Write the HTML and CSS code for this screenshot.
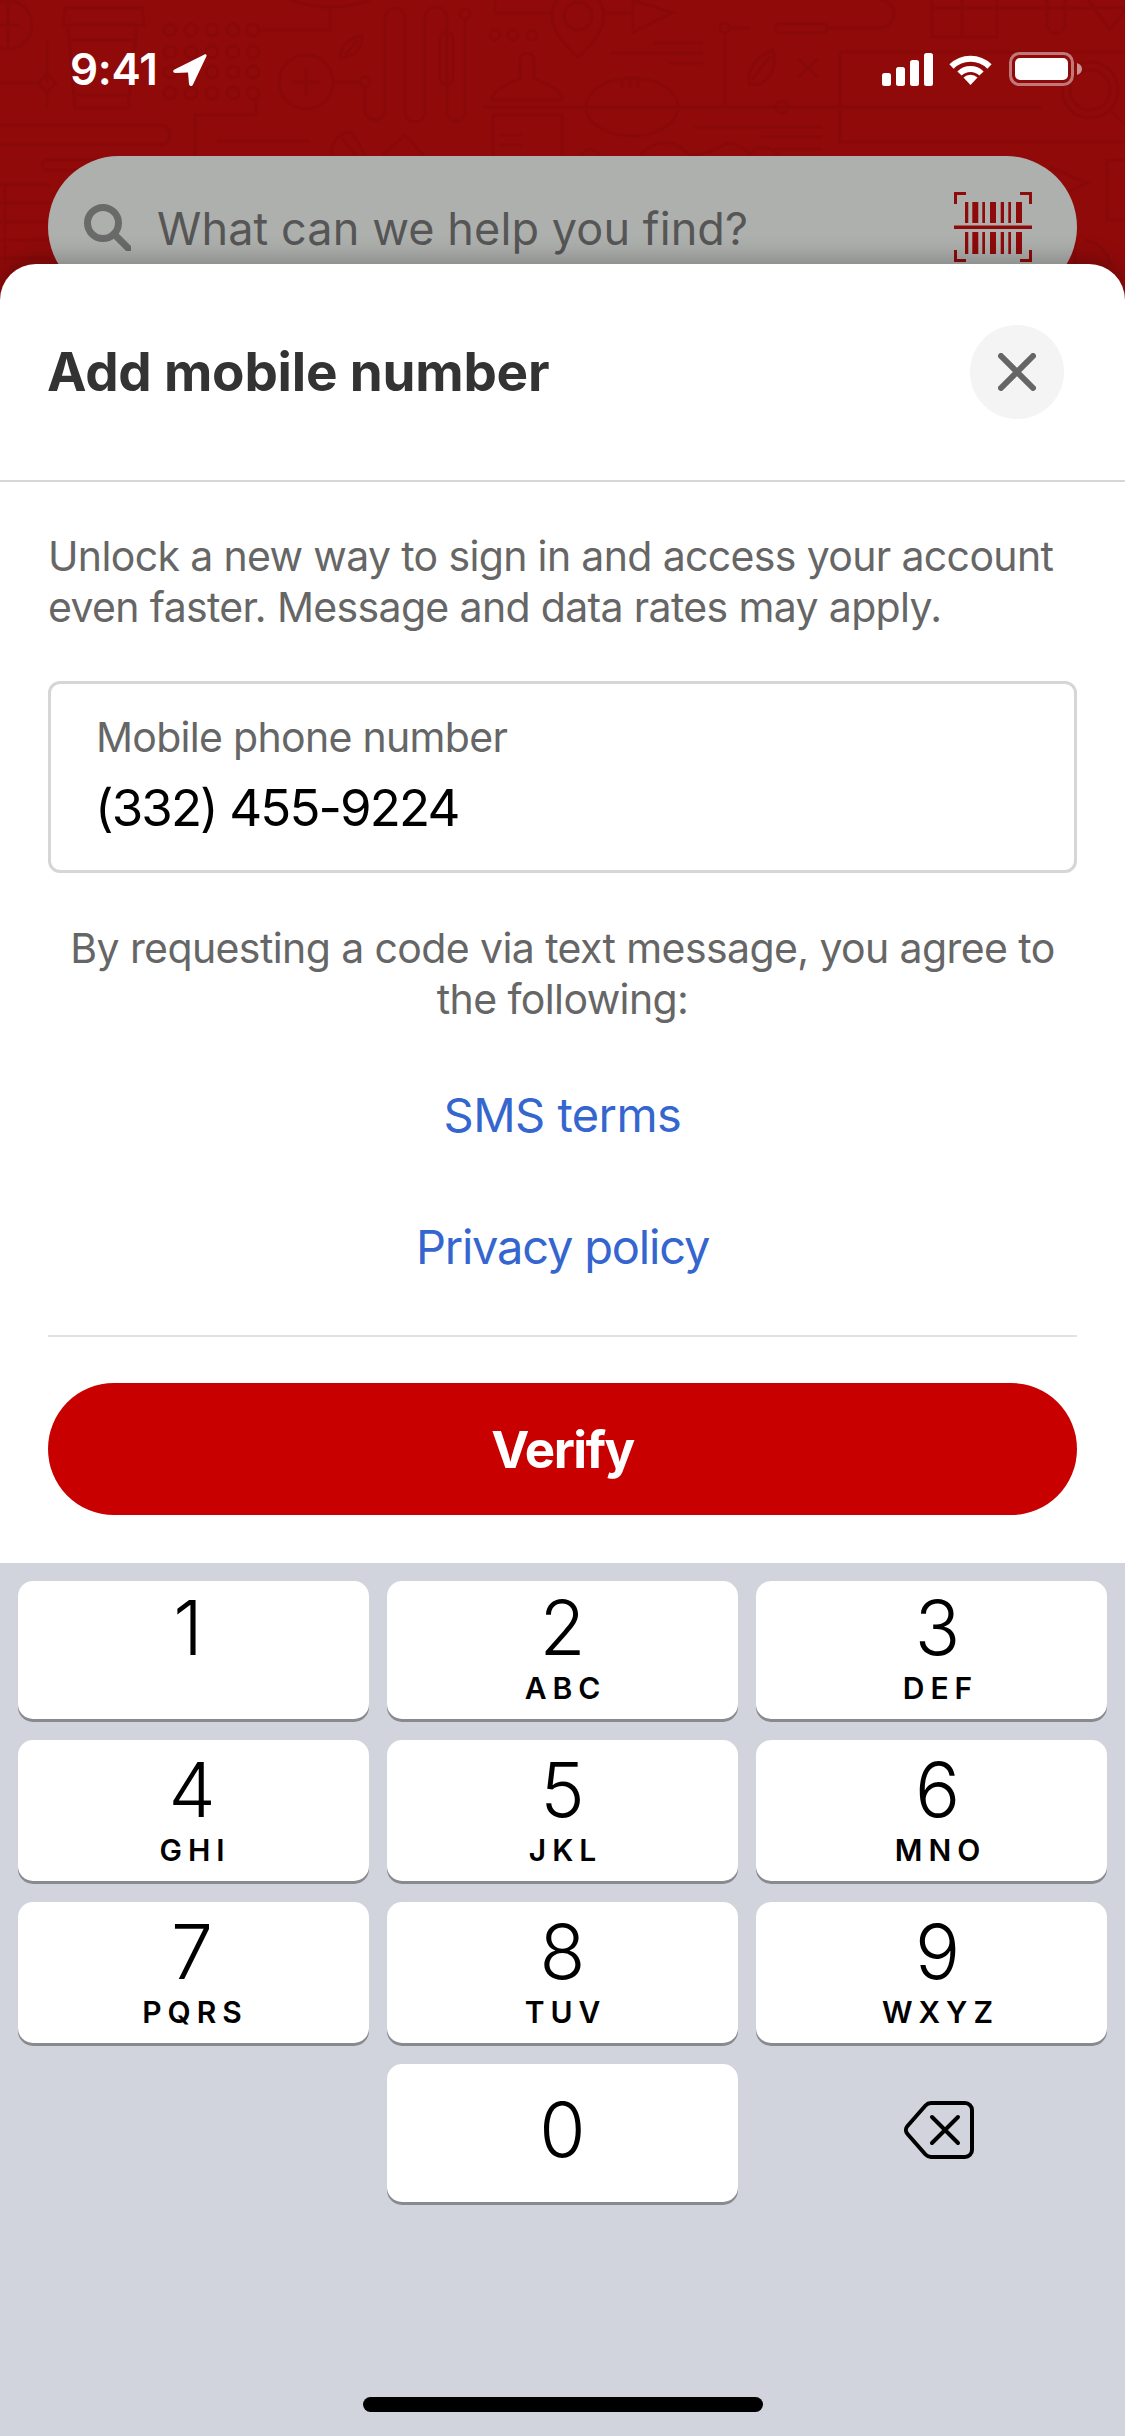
FILE: index.html
```html
<!DOCTYPE html>
<html lang="en">
<head>
<meta charset="utf-8">
<title>Add mobile number</title>
<link rel="stylesheet" href="styles.css">
</head>
<body>
<div class="screen">
  <header class="top">
    <svg class="pattern" viewBox="0 0 1125 304" fill="none" aria-hidden="true">
      <!-- left cluster -->
      <circle cx="8" cy="25" r="24"/><path d="M0 25H20M8 0V50"/>
      <path d="M65 8H142L144 25H63ZM68 25L75 108H128L137 25M70 40H134M73 95H130"/>
      <path d="M47 40V83M0 83H38M47 74L56 83L47 92L38 83Z M47 92V108"/>
      <circle cx="170" cy="30" r="6"/><circle cx="191" cy="30" r="6"/><circle cx="212" cy="30" r="6"/><circle cx="233" cy="30" r="6"/><circle cx="253" cy="30" r="6"/>
      <circle cx="170" cy="52" r="6"/><circle cx="191" cy="52" r="6"/><circle cx="212" cy="52" r="6"/><circle cx="233" cy="52" r="6"/><circle cx="253" cy="52" r="6"/>
      <circle cx="170" cy="72" r="6"/><circle cx="191" cy="72" r="6"/><circle cx="212" cy="72" r="6"/><circle cx="233" cy="72" r="6"/><circle cx="253" cy="72" r="6"/>
      <circle cx="170" cy="93" r="6"/><circle cx="191" cy="93" r="6"/><circle cx="212" cy="93" r="6"/><circle cx="233" cy="93" r="6"/><circle cx="253" cy="93" r="6"/>
      <path d="M259 30H330V8M290 0Q330 14 370 0"/>
      <path d="M340 58C340 46 350 37 362 36C364 46 354 58 340 58ZM345 55L358 40"/>
      <circle cx="306" cy="82" r="27"/><path d="M292 82H320M306 68V96M333 82H360"/>
      <circle cx="365" cy="82" r="5"/>
      <path d="M365 87V110A10 10 0 0 0 385 110V18A10 10 0 0 1 405 18V112A10 10 0 0 0 425 112V18A11 11 0 0 1 447 18V112A9 9 0 0 0 465 112V20"/>
      <circle cx="465" cy="14" r="5"/>
      <rect x="440" y="32" width="13" height="52" rx="6"/>
      <path d="M0 125H160A10 10 0 0 1 160 145H0M195 156V115H256V97M217 141H310M47 160H100M47 170H100M47 160A5 5 0 0 0 47 170"/>
      <path d="M332 155C330 142 340 132 350 132C358 140 362 148 364 156M342 138L356 156"/>
      <path d="M5 185V264M0 185H50M0 203H50M0 222H50M0 240H50M0 258H50"/>
      <!-- middle cluster -->
      <path d="M495 0V13H552M602 13H633M633 0V32L672 13L633 0"/>
      <circle cx="578" cy="16" r="14"/>
      <path d="M552 16A26 26 0 0 1 604 16C604 32 590 46 578 57C566 46 552 32 552 16Z"/>
      <circle cx="495" cy="35" r="5"/><circle cx="513" cy="35" r="5"/><circle cx="532" cy="35" r="5"/>
      <path d="M653 43H703M610 53H703M668 63H703"/>
      <circle cx="725" cy="28" r="5"/><path d="M725 33V107M730 28H750"/>
      <path d="M492 100C492 88 512 84 520 78V60C520 51 534 51 534 60V78C544 84 562 88 562 100Z"/>
      <path d="M483 107H1042" class="thick"/>
      <ellipse cx="632" cy="107" rx="46" ry="29"/><path d="M622 78V88M630 78V88M638 78V88"/>
      <path d="M493 156V115H562V156M499 135H522M499 145H522"/>
      <path d="M383 155L405 135L423 155M580 156Q590 143 600 156M640 155Q665 130 690 155Q708 155 727 143Q740 143 750 155Q760 140 780 155"/>
      <path d="M693 127H822M760 137H822M773 149H822"/>
      <!-- right cluster -->
      <path d="M777 24H825Q829 28 825 33H777Q773 28 777 24ZM827 28H880A14 14 0 0 0 880 0"/>
      <path d="M932 0V37H997V0M962 0V37M932 8H1125M1047 0V24A9 9 0 0 0 1065 24V0M1088 0L1110 30L1125 10"/>
      <circle cx="782" cy="107" r="6"/>
      <path d="M750 85C745 68 760 55 772 50C778 62 772 78 760 84ZM752 80L770 56M798 58L818 78M818 58L798 78"/>
      <path d="M1125 52H840V142H1125"/>
      <circle cx="1090" cy="90" r="28"/><circle cx="1090" cy="90" r="20"/><path d="M1110 110L1125 125"/>
      <path d="M1050 167L1087 183L1050 200M1107 175V160H1125M1107 175V220H1125"/>
      <path d="M1085 240A30 30 0 0 1 1110 264M1075 240V264"/>
    </svg>
    <div class="status">
      <div class="status-left">
        <span class="time">9:41</span>
        <svg class="arrow" viewBox="0 0 34 34"><path d="M1.500 16.500L31.500 1.500C33 .8 34 2 33.300 3.500L20 31.500C19 33.800 16.500 33.500 16 31L15 19.500L2.500 20C-.2 19.800 -.6 17.500 1.500 16.500Z"/></svg>
      </div>
      <div class="status-right">
        <svg class="signal" viewBox="0 0 51 33"><rect x="0" y="20" width="9" height="13" rx="2.500"/><rect x="14" y="14" width="9" height="19" rx="2.500"/><rect x="28" y="7" width="9" height="26" rx="2.500"/><rect x="42" y="0" width="9" height="33" rx="2.500"/></svg>
        <svg class="wifi" viewBox="0 0 45 33"><path d="M3.500 14.500A27 27 0 0 1 41.500 14.500" /><path d="M11.500 21.500A15.500 15.500 0 0 1 33.500 21.500"/><path class="wifi-dot" d="M22.500 33L15.500 25.500A10 10 0 0 1 29.500 25.500Z"/></svg>
        <svg class="battery" viewBox="0 0 73 34"><rect class="battery-shell" x="1.500" y="1.500" width="62" height="31" rx="9"/><rect x="6" y="6" width="53" height="22" rx="5"/><path class="battery-nub" d="M68 11C71 12 73 14 73 17C73 20 71 22 68 23Z"/></svg>
      </div>
    </div>
    <div class="search">
      <svg class="search-icon" viewBox="0 0 48 48" fill="none"><circle cx="20" cy="20" r="15.500"/><path d="M31 31L45.500 45.500"/></svg>
      <span class="search-text">What can we help you find?</span>
      <svg class="barcode" viewBox="0 0 78 70">
        <path class="bracket" d="M1.500 12V1.500H12M66 1.500H76.500V12M1.500 58V68.500H12M66 68.500H76.500V58"/>
        <path d="M11 10H14.300V31H11ZM18.300 10H24.300V31H18.300ZM28.300 10H31V31H28.300ZM36 10H42V31H36ZM46.700 10H50V31H46.700ZM54.300 10H57V31H54.300ZM62 10H68V31H62Z"/>
        <path d="M11 40H14.300V62H11ZM18.300 40H24.300V62H18.300ZM28.300 40H31V62H28.300ZM36 40H42V62H36ZM46.700 40H50V62H46.700ZM54.300 40H57V62H54.300ZM62 40H68V62H62Z"/>
        <rect x="0" y="33.500" width="78" height="3.500"/>
      </svg>
    </div>
  </header>

  <section class="sheet">
    <div class="sheet-head">
      <h1 class="sheet-title">Add mobile number</h1>
      <button class="close" aria-label="Close">
        <svg viewBox="0 0 38 38" fill="none"><path d="M3 3L35 35M35 3L3 35"/></svg>
      </button>
    </div>
    <div class="sheet-body">
      <p class="intro">Unlock a new way to sign in and access your account even faster. Message and data rates may apply.</p>
      <div class="field">
        <div class="field-label">Mobile phone number</div>
        <div class="field-value">(332) 455-9224</div>
      </div>
      <p class="consent">By requesting a code via text message, you agree to the following:</p>
      <a class="link">SMS terms</a>
      <a class="link link-wide">Privacy policy</a>
      <hr class="rule">
      <button class="verify">Verify</button>
    </div>
  </section>

  <section class="keyboard">
    <div class="keys">
      <div class="key key-first key-left"><span class="digit digit-one">1</span><span class="letters"></span></div>
      <div class="key key-first"><span class="digit">2</span><span class="letters">ABC</span></div>
      <div class="key key-first key-right"><span class="digit">3</span><span class="letters">DEF</span></div>
      <div class="key key-left"><span class="digit">4</span><span class="letters">GHI</span></div>
      <div class="key"><span class="digit">5</span><span class="letters">JKL</span></div>
      <div class="key key-right"><span class="digit">6</span><span class="letters">MNO</span></div>
      <div class="key key-left"><span class="digit">7</span><span class="letters">PQRS</span></div>
      <div class="key"><span class="digit">8</span><span class="letters">TUV</span></div>
      <div class="key key-right"><span class="digit">9</span><span class="letters">WXYZ</span></div>
      <div class="key-empty"></div>
      <div class="key key-zero"><span class="digit">0</span></div>
      <div class="key-delete">
        <svg viewBox="0 0 70 58" fill="none"><path d="M27 2H61A7 7 0 0 1 68 9V49A7 7 0 0 1 61 56H27A8 8 0 0 1 21.500 53.500L3.500 33A6 6 0 0 1 3.500 25L21.500 4.500A8 8 0 0 1 27 2Z"/><path d="M28 16L54 42M54 16L28 42"/></svg>
      </div>
    </div>
    <div class="home-indicator"></div>
  </section>
</div>
</body>
</html>
```
FILE: styles.css
```css
* { box-sizing: border-box; }
html, body { margin: 0; padding: 0; }
body { font-family: Inter, "Liberation Sans", sans-serif; background: #fff; }

.screen {
  width: 1125px;
  height: 2436px;
  display: flex;
  flex-direction: column;
  overflow: hidden;
}

/* Header behind the sheet */
.top {
  position: relative;
  height: 304px;
  flex: none;
  background: #910a0a;
}
.pattern {
  position: absolute;
  inset: 0;
  width: 1125px;
  height: 304px;
  stroke: #890909;
  stroke-width: 3;
}
.pattern .thick { stroke-width: 4; }

.status {
  position: relative;
  height: 156px;
  padding: 47px 43px 0 70px;
  display: flex;
  justify-content: space-between;
  align-items: flex-start;
}
.status-left { display: flex; align-items: flex-start; }
.time {
  font-size: 44px;
  line-height: 44px;
  font-weight: 600;
  color: #fff;
  letter-spacing: -0.3px;
}
.arrow { width: 34px; height: 34px; margin: 6px 0 0 15px; fill: #fff; }
.status-right { display: flex; align-items: flex-start; padding-top: 5px; }
.signal { width: 51px; height: 33px; fill: #fff; margin-top: 1px; }
.wifi {
  width: 45px;
  height: 33px;
  margin: 0 16px 0 15px;
  fill: none;
  stroke: #fff;
  stroke-width: 6;
}
.wifi-dot { fill: #fff; stroke: none; }
.battery { width: 73px; height: 34px; fill: #fff; }
.battery-shell { fill: none; stroke: rgba(255, 255, 255, 0.45); stroke-width: 3; }
.battery-nub { fill: rgba(255, 255, 255, 0.55); }

.search {
  position: relative;
  height: 142px;
  margin: 0 48px;
  border-radius: 71px;
  background: #aeb0ae;
  display: flex;
  align-items: center;
  padding-left: 35px;
  padding-right: 45px;
}
.search-icon { width: 48px; height: 48px; fill: none; stroke: #6a6a6a; stroke-width: 7; flex: none; }
.search-icon path { stroke-linecap: round; }
.search-text {
  margin-left: 26px;
  padding-top: 3px;
  font-size: 45px;
  letter-spacing: 0.1px;
  color: #565656;
  white-space: nowrap;
}
.barcode { width: 78px; height: 70px; margin-left: auto; fill: #8f0a0a; flex: none; }
.bracket { fill: none; stroke: #8f0a0a; stroke-width: 3; }

/* Sheet */
.sheet {
  position: relative;
  margin-top: -40px;
  height: 1299px;
  flex: none;
  background: #fff;
  border-radius: 36px 36px 0 0;
  box-shadow: 0 -6px 22px rgba(0, 0, 0, 0.24);
}
.sheet-head {
  display: flex;
  align-items: center;
  justify-content: space-between;
  padding: 61px 61px 61px 47px;
  border-bottom: 2px solid #d6d6d6;
}
.sheet-title {
  margin: 0;
  font-size: 53px;
  line-height: 64px;
  font-weight: 700;
  letter-spacing: -0.2px;
  color: #333;
}
.close {
  width: 94px;
  height: 94px;
  padding: 0;
  border: 0;
  border-radius: 50%;
  background: #f4f4f4;
  display: flex;
  align-items: center;
  justify-content: center;
}
.close svg { width: 38px; height: 38px; stroke: #666; stroke-width: 6; stroke-linecap: round; }

.sheet-body {
  padding: 49px 48px 0;
  display: flex;
  flex-direction: column;
}
.intro, .consent {
  margin: 0;
  font-size: 41px;
  line-height: 51px;
  letter-spacing: -0.65px;
  color: #666;
}
.field {
  margin-top: 48px;
  height: 192px;
  padding: 28px 44px 0;
  border: 3px solid #d6d6d6;
  border-radius: 12px;
}
.field-label {
  padding-left: 1px;
  font-size: 41px;
  line-height: 50px;
  letter-spacing: -0.7px;
  color: #666;
}
.field-value {
  margin-top: 15px;
  font-size: 51px;
  line-height: 62px;
  letter-spacing: -1.9px;
  color: #000;
}
.consent {
  margin-top: 50px;
  text-align: center;
  letter-spacing: -0.6px;
}
.link {
  height: 132px;
  display: flex;
  align-items: center;
  justify-content: center;
  font-size: 47px;
  letter-spacing: -0.55px;
  color: #3566d0;
}
.link:first-of-type { margin-top: 23px; }
.link-wide { letter-spacing: -1.2px; }
.rule {
  margin: 23px 0 0;
  height: 2px;
  border: 0;
  background: #e2e2e2;
}
.verify {
  margin-top: 46px;
  height: 132px;
  border: 0;
  border-radius: 66px;
  background: #c80000;
  color: #fff;
  font-family: inherit;
  font-size: 51px;
  font-weight: 700;
  letter-spacing: -1.5px;
}

/* Keypad */
.keyboard {
  position: relative;
  flex: 1;
  background: #d1d4dc;
  padding-top: 18px;
}
.keys {
  display: grid;
  grid-template-columns: repeat(3, 351px);
  grid-template-rows: 138px 141px 141px 138px;
  column-gap: 18px;
  row-gap: 21px;
  padding: 0 18px;
}
.key {
  background: #fff;
  border-radius: 15px;
  box-shadow: 0 3px 0 #898a8e;
  display: flex;
  flex-direction: column;
  align-items: center;
  padding-top: 5px;
}
.key-first { padding-top: 2px; }
.key-zero { padding-top: 21px; }
.key-left { padding-right: 3px; }
.key-right { padding-left: 12px; }
.digit {
  font-size: 75px;
  line-height: 90px;
  font-weight: 300;
  color: #000;
}
.digit-one { margin-right: 8px; }
.letters {
  height: 36px;
  margin-top: -3px;
  padding-left: 6px;
  font-size: 30px;
  line-height: 36px;
  font-weight: 600;
  letter-spacing: 6px;
  color: #000;
}
.key-delete {
  display: flex;
  align-items: center;
  justify-content: center;
  padding: 0 0 6px 14px;
}
.key-delete svg {
  width: 70px;
  height: 58px;
  stroke: #000;
  stroke-width: 4;
  stroke-linecap: round;
}
.home-indicator {
  width: 400px;
  height: 15px;
  margin: 195px auto 0;
  border-radius: 8px;
  background: #000;
}
```
